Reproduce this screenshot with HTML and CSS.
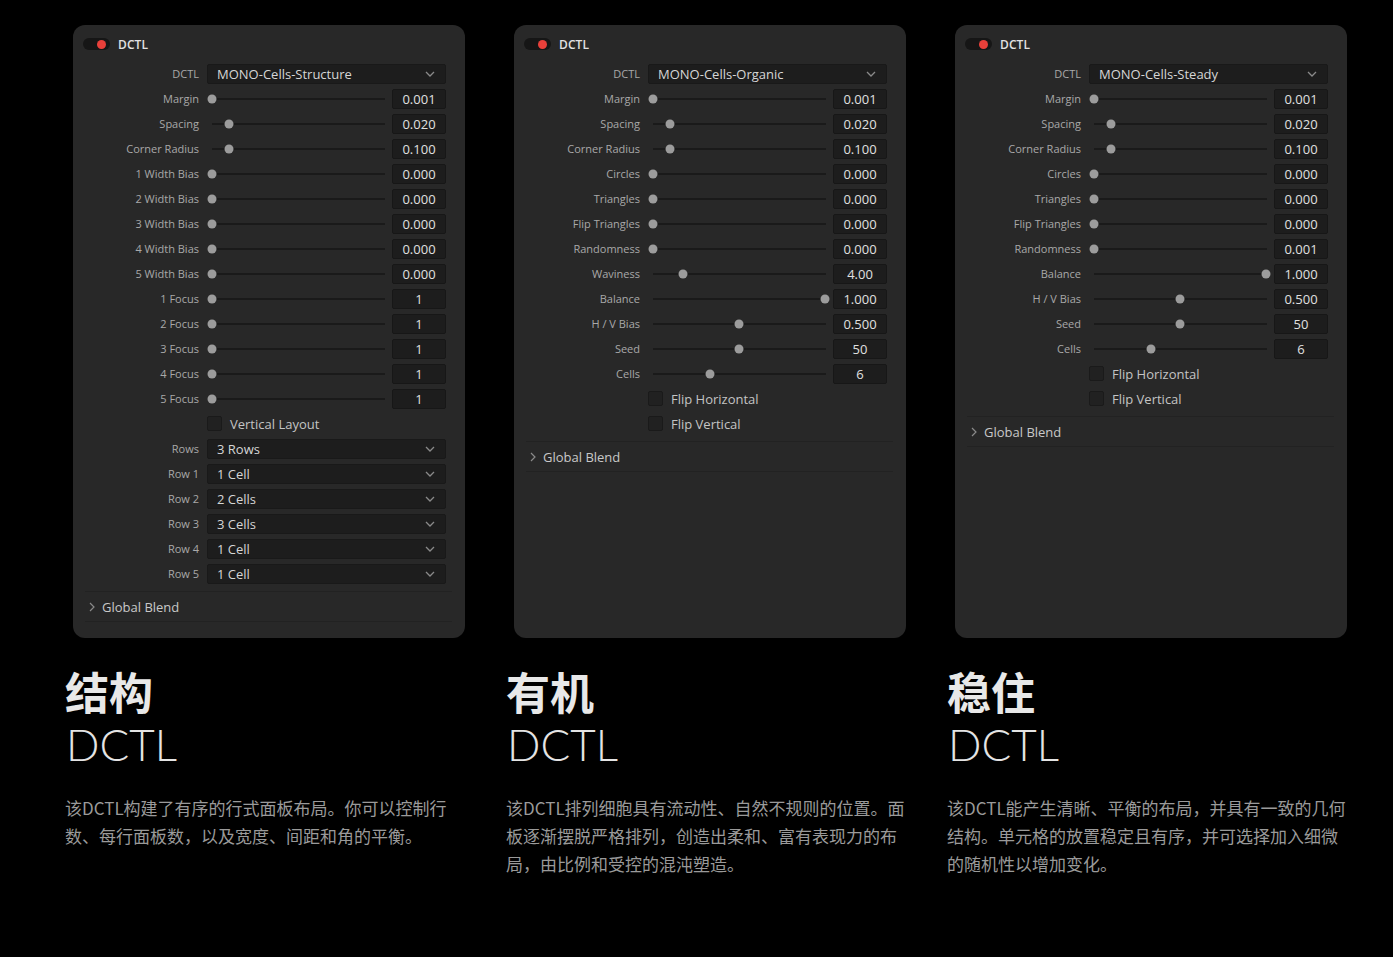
FILE: index.html
```html
<!DOCTYPE html>
<html lang="zh-CN">
<head>
<meta charset="utf-8">
<title>MONO Cells DCTL</title>
<link rel="stylesheet" href="styles.css">
</head>
<body>
<main class="page">

  <section class="col">
    <div class="panel">
      <div class="panel-head"><span class="toggle"><span class="dot"></span></span><span class="head-title">DCTL</span></div>
      <div class="rows">
        <div class="row"><span class="label">DCTL</span><div class="select"><span>MONO-Cells-Structure</span><svg class="chev" viewBox="0 0 10 6"><polyline points="1,1 5,5 9,1"/></svg></div></div>
        <div class="row"><span class="label">Margin</span><div class="slider"><div class="track"><span class="thumb" style="left:0%"></span></div></div><span class="value">0.001</span></div>
        <div class="row"><span class="label">Spacing</span><div class="slider"><div class="track"><span class="thumb" style="left:9.8%"></span></div></div><span class="value">0.020</span></div>
        <div class="row"><span class="label">Corner Radius</span><div class="slider"><div class="track"><span class="thumb" style="left:9.8%"></span></div></div><span class="value">0.100</span></div>
        <div class="row"><span class="label">1 Width Bias</span><div class="slider"><div class="track"><span class="thumb" style="left:0%"></span></div></div><span class="value">0.000</span></div>
        <div class="row"><span class="label">2 Width Bias</span><div class="slider"><div class="track"><span class="thumb" style="left:0%"></span></div></div><span class="value">0.000</span></div>
        <div class="row"><span class="label">3 Width Bias</span><div class="slider"><div class="track"><span class="thumb" style="left:0%"></span></div></div><span class="value">0.000</span></div>
        <div class="row"><span class="label">4 Width Bias</span><div class="slider"><div class="track"><span class="thumb" style="left:0%"></span></div></div><span class="value">0.000</span></div>
        <div class="row"><span class="label">5 Width Bias</span><div class="slider"><div class="track"><span class="thumb" style="left:0%"></span></div></div><span class="value">0.000</span></div>
        <div class="row"><span class="label">1 Focus</span><div class="slider"><div class="track"><span class="thumb" style="left:0%"></span></div></div><span class="value">1</span></div>
        <div class="row"><span class="label">2 Focus</span><div class="slider"><div class="track"><span class="thumb" style="left:0%"></span></div></div><span class="value">1</span></div>
        <div class="row"><span class="label">3 Focus</span><div class="slider"><div class="track"><span class="thumb" style="left:0%"></span></div></div><span class="value">1</span></div>
        <div class="row"><span class="label">4 Focus</span><div class="slider"><div class="track"><span class="thumb" style="left:0%"></span></div></div><span class="value">1</span></div>
        <div class="row"><span class="label">5 Focus</span><div class="slider"><div class="track"><span class="thumb" style="left:0%"></span></div></div><span class="value">1</span></div>
        <div class="row"><span class="label"></span><span class="check"></span><span class="check-text">Vertical Layout</span></div>
        <div class="row"><span class="label">Rows</span><div class="select"><span>3 Rows</span><svg class="chev" viewBox="0 0 10 6"><polyline points="1,1 5,5 9,1"/></svg></div></div>
        <div class="row"><span class="label">Row 1</span><div class="select"><span>1 Cell</span><svg class="chev" viewBox="0 0 10 6"><polyline points="1,1 5,5 9,1"/></svg></div></div>
        <div class="row"><span class="label">Row 2</span><div class="select"><span>2 Cells</span><svg class="chev" viewBox="0 0 10 6"><polyline points="1,1 5,5 9,1"/></svg></div></div>
        <div class="row"><span class="label">Row 3</span><div class="select"><span>3 Cells</span><svg class="chev" viewBox="0 0 10 6"><polyline points="1,1 5,5 9,1"/></svg></div></div>
        <div class="row"><span class="label">Row 4</span><div class="select"><span>1 Cell</span><svg class="chev" viewBox="0 0 10 6"><polyline points="1,1 5,5 9,1"/></svg></div></div>
        <div class="row"><span class="label">Row 5</span><div class="select"><span>1 Cell</span><svg class="chev" viewBox="0 0 10 6"><polyline points="1,1 5,5 9,1"/></svg></div></div>
      </div>
      <div class="group"><svg class="gchev" viewBox="0 0 6 10"><polyline points="1,1 5,5 1,9"/></svg><span>Global Blend</span></div>
    </div>
    <h2 class="title">结构</h2>
    <div class="sub">DCTL</div>
    <p class="desc">该DCTL构建了有序的行式面板布局。你可以控制行数、每行面板数，以及宽度、间距和角的平衡。</p>
  </section>

  <section class="col">
    <div class="panel">
      <div class="panel-head"><span class="toggle"><span class="dot"></span></span><span class="head-title">DCTL</span></div>
      <div class="rows">
        <div class="row"><span class="label">DCTL</span><div class="select"><span>MONO-Cells-Organic</span><svg class="chev" viewBox="0 0 10 6"><polyline points="1,1 5,5 9,1"/></svg></div></div>
        <div class="row"><span class="label">Margin</span><div class="slider"><div class="track"><span class="thumb" style="left:0%"></span></div></div><span class="value">0.001</span></div>
        <div class="row"><span class="label">Spacing</span><div class="slider"><div class="track"><span class="thumb" style="left:9.8%"></span></div></div><span class="value">0.020</span></div>
        <div class="row"><span class="label">Corner Radius</span><div class="slider"><div class="track"><span class="thumb" style="left:9.8%"></span></div></div><span class="value">0.100</span></div>
        <div class="row"><span class="label">Circles</span><div class="slider"><div class="track"><span class="thumb" style="left:0%"></span></div></div><span class="value">0.000</span></div>
        <div class="row"><span class="label">Triangles</span><div class="slider"><div class="track"><span class="thumb" style="left:0%"></span></div></div><span class="value">0.000</span></div>
        <div class="row"><span class="label">Flip Triangles</span><div class="slider"><div class="track"><span class="thumb" style="left:0%"></span></div></div><span class="value">0.000</span></div>
        <div class="row"><span class="label">Randomness</span><div class="slider"><div class="track"><span class="thumb" style="left:0%"></span></div></div><span class="value">0.000</span></div>
        <div class="row"><span class="label">Waviness</span><div class="slider"><div class="track"><span class="thumb" style="left:17.3%"></span></div></div><span class="value">4.00</span></div>
        <div class="row"><span class="label">Balance</span><div class="slider"><div class="track"><span class="thumb" style="left:99.5%"></span></div></div><span class="value">1.000</span></div>
        <div class="row"><span class="label">H / V Bias</span><div class="slider"><div class="track"><span class="thumb" style="left:49.7%"></span></div></div><span class="value">0.500</span></div>
        <div class="row"><span class="label">Seed</span><div class="slider"><div class="track"><span class="thumb" style="left:49.7%"></span></div></div><span class="value">50</span></div>
        <div class="row"><span class="label">Cells</span><div class="slider"><div class="track"><span class="thumb" style="left:33%"></span></div></div><span class="value">6</span></div>
        <div class="row"><span class="label"></span><span class="check"></span><span class="check-text">Flip Horizontal</span></div>
        <div class="row"><span class="label"></span><span class="check"></span><span class="check-text">Flip Vertical</span></div>
      </div>
      <div class="group"><svg class="gchev" viewBox="0 0 6 10"><polyline points="1,1 5,5 1,9"/></svg><span>Global Blend</span></div>
    </div>
    <h2 class="title">有机</h2>
    <div class="sub">DCTL</div>
    <p class="desc">该DCTL排列细胞具有流动性、自然不规则的位置。面板逐渐摆脱严格排列，创造出柔和、富有表现力的布局，由比例和受控的混沌塑造。</p>
  </section>

  <section class="col">
    <div class="panel">
      <div class="panel-head"><span class="toggle"><span class="dot"></span></span><span class="head-title">DCTL</span></div>
      <div class="rows">
        <div class="row"><span class="label">DCTL</span><div class="select"><span>MONO-Cells-Steady</span><svg class="chev" viewBox="0 0 10 6"><polyline points="1,1 5,5 9,1"/></svg></div></div>
        <div class="row"><span class="label">Margin</span><div class="slider"><div class="track"><span class="thumb" style="left:0%"></span></div></div><span class="value">0.001</span></div>
        <div class="row"><span class="label">Spacing</span><div class="slider"><div class="track"><span class="thumb" style="left:9.8%"></span></div></div><span class="value">0.020</span></div>
        <div class="row"><span class="label">Corner Radius</span><div class="slider"><div class="track"><span class="thumb" style="left:9.8%"></span></div></div><span class="value">0.100</span></div>
        <div class="row"><span class="label">Circles</span><div class="slider"><div class="track"><span class="thumb" style="left:0%"></span></div></div><span class="value">0.000</span></div>
        <div class="row"><span class="label">Triangles</span><div class="slider"><div class="track"><span class="thumb" style="left:0%"></span></div></div><span class="value">0.000</span></div>
        <div class="row"><span class="label">Flip Triangles</span><div class="slider"><div class="track"><span class="thumb" style="left:0%"></span></div></div><span class="value">0.000</span></div>
        <div class="row"><span class="label">Randomness</span><div class="slider"><div class="track"><span class="thumb" style="left:0%"></span></div></div><span class="value">0.001</span></div>
        <div class="row"><span class="label">Balance</span><div class="slider"><div class="track"><span class="thumb" style="left:99.5%"></span></div></div><span class="value">1.000</span></div>
        <div class="row"><span class="label">H / V Bias</span><div class="slider"><div class="track"><span class="thumb" style="left:49.7%"></span></div></div><span class="value">0.500</span></div>
        <div class="row"><span class="label">Seed</span><div class="slider"><div class="track"><span class="thumb" style="left:49.7%"></span></div></div><span class="value">50</span></div>
        <div class="row"><span class="label">Cells</span><div class="slider"><div class="track"><span class="thumb" style="left:33%"></span></div></div><span class="value">6</span></div>
        <div class="row"><span class="label"></span><span class="check"></span><span class="check-text">Flip Horizontal</span></div>
        <div class="row"><span class="label"></span><span class="check"></span><span class="check-text">Flip Vertical</span></div>
      </div>
      <div class="group"><svg class="gchev" viewBox="0 0 6 10"><polyline points="1,1 5,5 1,9"/></svg><span>Global Blend</span></div>
    </div>
    <h2 class="title">稳住</h2>
    <div class="sub">DCTL</div>
    <p class="desc">该DCTL能产生清晰、平衡的布局，并具有一致的几何结构。单元格的放置稳定且有序，并可选择加入细微的随机性以增加变化。</p>
  </section>

</main>
</body>
</html>
```

FILE: styles.css
```css
* { box-sizing: border-box; }

html, body {
  margin: 0;
  padding: 0;
  background: #000;
}

body {
  font-family: "Open Sans", "Noto Sans", "Noto Sans CJK SC", sans-serif;
  color: #ccc;
}

.page {
  display: grid;
  grid-template-columns: repeat(3, 408px);
  column-gap: 33px;
  padding: 25px 0 40px 65px;
  align-items: start;
}

.col {
  display: flex;
  flex-direction: column;
}

/* ---------- panel ---------- */
.panel {
  margin-left: 8px;
  width: 392px;
  height: 613px;
  background: #282828;
  border-radius: 12px;
  padding: 6px 19px 0 0;
  display: flex;
  flex-direction: column;
}

.panel-head {
  height: 26px;
  display: flex;
  align-items: center;
  padding-left: 10px;
  gap: 8px;
}

.toggle {
  width: 27px;
  height: 12px;
  border-radius: 6px;
  background: #161616;
  display: flex;
  align-items: center;
  justify-content: flex-end;
  padding-right: 4px;
}

.dot {
  width: 9px;
  height: 9px;
  border-radius: 50%;
  background: #e8403a;
}

.head-title {
  font-size: 12px;
  font-weight: 600;
  color: #e2e2e2;
  letter-spacing: 0.1px;
}

.rows {
  margin-top: 4px;
  display: flex;
  flex-direction: column;
}

.row {
  height: 25px;
  display: flex;
  align-items: center;
}

.label {
  width: 126px;
  flex: none;
  text-align: right;
  font-size: 11px;
  color: #a9a9a9;
  margin-right: 8px;
  white-space: nowrap;
}

.select {
  flex: 1;
  height: 20px;
  background: #1d1d1d;
  border: 1px solid #191919;
  border-radius: 2px;
  display: flex;
  align-items: center;
  justify-content: space-between;
  padding: 0 10px 0 9px;
  font-size: 13px;
  color: #d6d6d6;
}

.chev {
  width: 10px;
  height: 6px;
  fill: none;
  stroke: #8a8a8a;
  stroke-width: 1.3;
}

.slider {
  flex: 1;
  height: 20px;
  margin-right: 2px;
  padding: 0 5px;
  display: flex;
  align-items: center;
}

.track {
  flex: 1;
  height: 2px;
  background: #1a1a1a;
  position: relative;
}

.thumb {
  position: absolute;
  top: 50%;
  width: 9px;
  height: 9px;
  border-radius: 50%;
  background: #9c9c9c;
  transform: translate(-50%, -50%);
}

.value {
  width: 54px;
  height: 20px;
  flex: none;
  background: #1d1d1d;
  border: 1px solid #171717;
  border-radius: 2px;
  display: flex;
  align-items: center;
  justify-content: center;
  font-size: 13px;
  color: #e0e0e0;
}

.check {
  width: 15px;
  height: 15px;
  flex: none;
  background: #212121;
  border: 1px solid #1a1a1a;
  border-radius: 2px;
  margin-right: 8px;
}

.check-text {
  font-size: 13px;
  color: #c4c4c4;
}

.group {
  margin: 5px 0 0 12px;
  height: 31px;
  border-top: 1px solid #222;
  border-bottom: 1px solid #222;
  margin-right: -6px;
  display: flex;
  align-items: center;
  padding-left: 4px;
  gap: 7px;
  font-size: 13px;
  color: #c8c8c8;
}

.gchev {
  width: 6px;
  height: 10px;
  fill: none;
  stroke: #8a8a8a;
  stroke-width: 1.2;
}

/* ---------- text ---------- */
.title {
  margin: 27px 0 0;
  font-family: "Noto Sans CJK SC", "Noto Sans", sans-serif;
  font-weight: 700;
  font-size: 44px;
  line-height: 52px;
  color: #e8e8e8;
}

.sub {
  margin-top: 1px;
  font-family: Lato, "Open Sans", sans-serif;
  font-weight: 300;
  font-size: 44px;
  line-height: 52px;
  color: #e4e4e4;
  padding-left: 1px;
}

.desc {
  margin: 24px 0 0;
  width: 406px;
  font-family: "Noto Sans CJK SC", "Noto Sans", sans-serif;
  font-size: 17px;
  line-height: 28px;
  color: #9a9a9a;
}
```
